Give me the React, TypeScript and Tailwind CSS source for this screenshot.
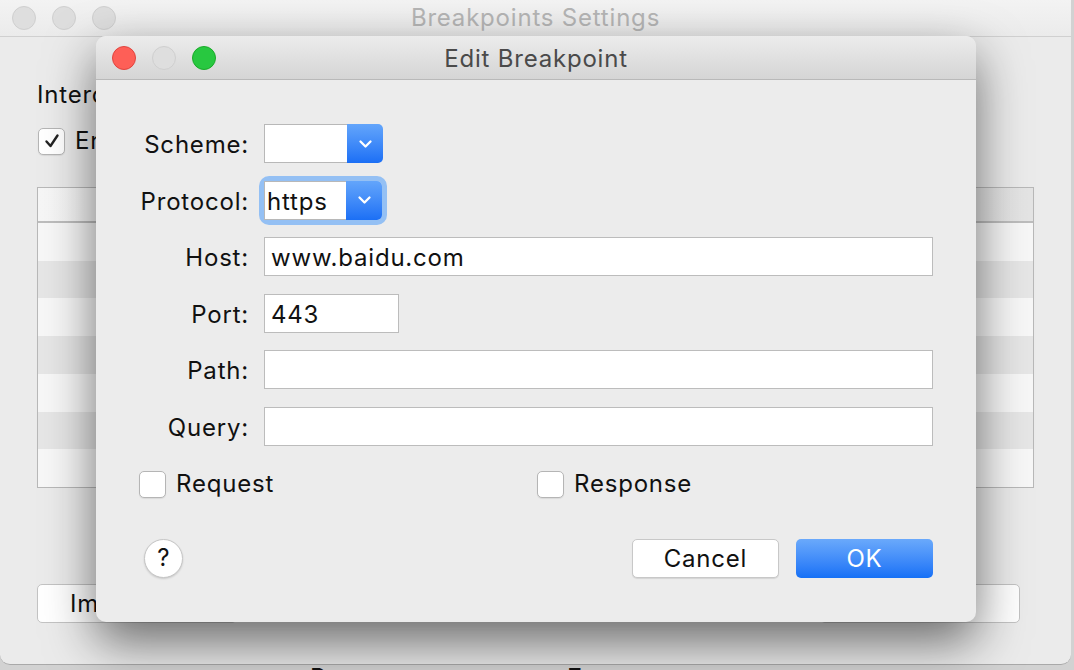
import React from "react"

const Chevron = () => (
  <svg width="15" height="10" viewBox="0 0 15 10">
    <path d="M2.5 2.5 7.5 7.5l5-5" fill="none" stroke="white" strokeWidth="2.3" strokeLinecap="round" strokeLinejoin="round" />
  </svg>
)

function Lights({ active }: { active?: boolean }) {
  const base = "h-[24px] w-[24px] rounded-full border"
  return (
    <div className="flex gap-[16px]">
      <span className={active ? `${base} border-[#e0443e] bg-[#fe5f57]` : `${base} border-[#cfcfcf] bg-[#dedede]`} />
      <span className={`${base} border-[#cfcfcf] bg-[#dedede]`} />
      <span className={active ? `${base} border-[#1aab29] bg-[#28c840]` : `${base} border-[#cfcfcf] bg-[#dedede]`} />
    </div>
  )
}

function Dropdown({ value, width, focused }: { value: string; width: string; focused?: boolean }) {
  return (
    <div className={`flex h-[39px] ${width} rounded-[5px] ${focused ? "ring-[5px] ring-[#94c0f4]" : ""}`}>
      <div className="flex-1 border border-r-0 border-[#b8b8b8] bg-white pl-[2px] pt-[2px] text-[24px] leading-[35px]">{value}</div>
      <div className="flex w-[36px] items-center justify-center rounded-r-[5px] bg-gradient-to-b from-[#63a5fb] to-[#1b6ff5]">
        <Chevron />
      </div>
    </div>
  )
}

function Field({ value = "", width = "w-full" }: { value?: string; width?: string }) {
  return (
    <div className={`h-[39px] ${width} border border-[#bcbcbc] bg-white px-[6px] pt-[3px] text-[24px] leading-[34px] text-[#111]`}>{value}</div>
  )
}

function Check({ label, checked }: { label: string; checked?: boolean }) {
  return (
    <div className="flex items-center gap-[10px]">
      <span className="flex h-[27px] w-[27px] items-center justify-center rounded-[5px] border border-[#b5b5b5] bg-white shadow-[0_1px_1px_rgba(0,0,0,0.08)]">
        {checked && (
          <svg width="18" height="18" viewBox="0 0 18 18">
            <path d="M3.5 9.5 7.5 14 14.5 3.5" fill="none" stroke="#222" strokeWidth="2.4" strokeLinecap="round" strokeLinejoin="round" />
          </svg>
        )}
      </span>
      <span className="text-[24px] text-[#111]">{label}</span>
    </div>
  )
}

const rows = [0, 1, 2, 3, 4, 5, 6]

export default function App() {
  return (
    <div className="relative h-[670px] w-[1074px] overflow-hidden bg-[#d2d2d2] font-['Inter',sans-serif] tracking-[0.8px] text-[#111]">
      {/* background window */}
      <div className="flex h-[665px] w-[1071px] flex-col overflow-hidden rounded-b-[10px] border-b border-[#a9a9a9] bg-[#ebebeb]">
        <div className="relative flex h-[37px] items-center border-b border-[#d0d0d0] bg-gradient-to-b from-[#f3f3f3] to-[#ebebeb] pl-[12px]">
          <Lights />
          <div className="absolute inset-x-0 top-0 text-center text-[24px] leading-[36px] text-[#b5b5b5]">Breakpoints Settings</div>
        </div>
        <div className="flex flex-col px-[37px] pt-[44px]">
          <div className="text-[24px] leading-[28px] whitespace-nowrap">
            Intercept requests and responses matching these locations will be paused.
          </div>
          <div className="mt-[14px] pl-[1px]">
            <Check label="Enable Breakpoints" checked />
          </div>
          <div className="mt-[28px] flex h-[301px] flex-col border border-[#b8b8b8] bg-white">
            <div className="h-[35px] border-b-2 border-[#bdbdbd] bg-gradient-to-r from-[#f6f6f6] to-[#e4e4e4]" />
            {rows.map((r) => (
              <div key={r} className={r % 2 === 0 ? "h-[38px] bg-[#f7f7f7]" : "h-[38px] bg-[#e6e6e6]"} />
            ))}
          </div>
          <div className="mt-[96px] flex justify-between pr-[14px]">
            <div className="h-[39px] w-[200px] rounded-[5px] border border-[#c3c3c3] bg-white pl-[32px] text-[24px] leading-[37px]">Import</div>
            <div className="h-[39px] w-[200px] rounded-[5px] border border-[#c3c3c3] bg-white" />
          </div>
        </div>
      </div>
      <div className="flex h-[5px] overflow-hidden">
        <span className="ml-[310px] mt-[1px] text-[24px] leading-[24px]">Response</span>
        <span className="ml-[140px] mt-[1px] text-[24px] leading-[24px]">7 ms</span>
      </div>

      {/* dialog */}
      <div className="absolute left-[96px] top-[36px] flex w-[880px] flex-col rounded-[10px] bg-[#ececec] shadow-[0_20px_50px_rgba(0,0,0,0.55)]">
        <div className="relative flex h-[44px] items-center rounded-t-[10px] border-b border-[#b9b9b9] bg-gradient-to-b from-[#ececec] to-[#d5d5d5] pl-[16px]">
          <Lights active />
          <div className="absolute inset-x-0 top-0 pt-[1px] text-center text-[24px] leading-[44px] text-[#4a4a4a]">Edit Breakpoint</div>
        </div>
        <div className="flex flex-col pb-[44px] pr-[43px] pt-[44px]">
          <div className="grid grid-cols-[153px_1fr] items-center gap-x-[15px] gap-y-[17.6px] text-[24px]">
            <span className="pt-[3px] text-right">Scheme:</span>
            <Dropdown value="" width="w-[119px]" />
            <span className="pt-[3px] text-right">Protocol:</span>
            <Dropdown value="https" width="w-[118px]" focused />
            <span className="pt-[3px] text-right">Host:</span>
            <Field value="www.baidu.com" />
            <span className="pt-[3px] text-right">Port:</span>
            <Field value="443" width="w-[135px]" />
            <span className="pt-[3px] text-right">Path:</span>
            <Field />
            <span className="pt-[3px] text-right">Query:</span>
            <Field />
          </div>
          <div className="mt-[25px] flex h-[27px] items-center pl-[43px]">
            <div className="w-[398px]">
              <Check label="Request" />
            </div>
            <Check label="Response" />
          </div>
          <div className="mt-[41px] flex h-[39px] items-center pl-[48px]">
            <div className="flex h-[39px] w-[39px] items-center justify-center rounded-full border border-[#c6c6c6] bg-white text-[24px] tracking-normal shadow-[0_1px_2px_rgba(0,0,0,0.15)]">?</div>
            <div className="ml-auto flex gap-[17px]">
              <div className="h-[39px] w-[147px] rounded-[5px] border border-[#c8c8c8] bg-white pt-[1px] text-center text-[24px] leading-[36px] shadow-[0_1px_1px_rgba(0,0,0,0.1)]">Cancel</div>
              <div className="h-[39px] w-[137px] rounded-[5px] bg-gradient-to-b from-[#6aa9fb] to-[#1470f6] pt-[1px] text-center text-[24px] leading-[38px] text-white">OK</div>
            </div>
          </div>
        </div>
      </div>
    </div>
  )
}
